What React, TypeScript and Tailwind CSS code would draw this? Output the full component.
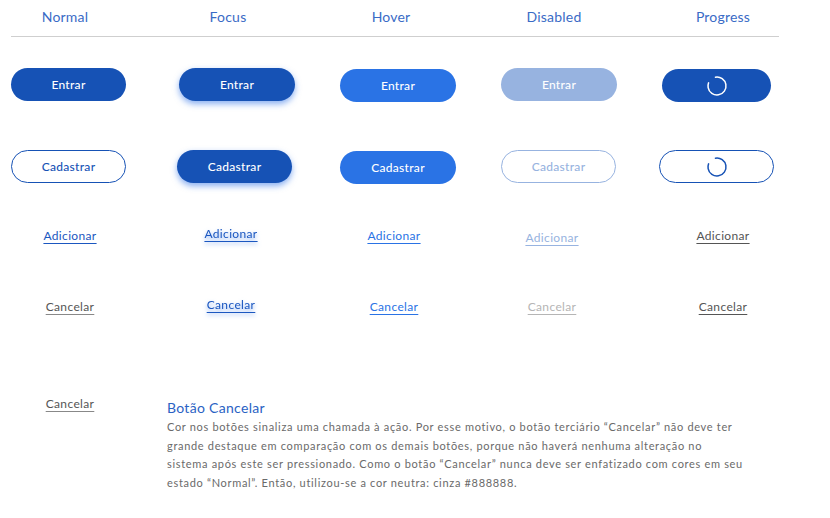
import React from "react";

const font = { fontFamily: "Lato, 'Open Sans', sans-serif" };

function Spinner({ color }: { color: string }) {
  const r = 9;
  const c = 2 * Math.PI * r;
  return (
    <svg width="22" height="22" viewBox="0 0 22 22" className="block">
      <circle
        cx="11"
        cy="11"
        r={r}
        fill="none"
        stroke={color}
        strokeWidth="1.5"
        strokeDasharray={`${c * 0.83} ${c}`}
        transform="rotate(-100 11 11)"
        strokeLinecap="round"
      />
    </svg>
  );
}

export default function App() {
  return (
    <div className="w-[830px] h-[518px] bg-white relative overflow-hidden" style={font}>
      {/* Header */}
      <div className="flex pt-[8px] text-[14px] leading-[18px] text-[#3a6bc6] tracking-[0.2px]">
        <div className="w-[130px] text-center">Normal</div>
        <div className="w-[196px] text-center">Focus</div>
        <div className="w-[130px] text-center">Hover</div>
        <div className="w-[196px] text-center">Disabled</div>
        <div className="w-[142px] text-center">Progress</div>
      </div>
      <div className="ml-[11px] mt-[10px] w-[768px] h-px bg-[#cfcfcf]" />

      {/* Entrar row */}
      <div className="flex items-start mt-[31px] h-[34px] text-[12px] font-medium tracking-[0.3px] text-white">
        <div className="ml-[11px] w-[115px] h-[33px] rounded-full bg-[#1652b5] flex items-center justify-center">Entrar</div>
        <div className="ml-[53px] w-[116px] h-[33px] rounded-full bg-[#1652b5] flex items-center justify-center shadow-[0_3px_6px_rgba(40,110,230,0.55)]">Entrar</div>
        <div className="ml-[45px] w-[116px] h-[33px] mt-[1px] rounded-full bg-[#2a73e5] flex items-center justify-center">Entrar</div>
        <div className="ml-[45px] w-[116px] h-[33px] rounded-full bg-[#97b3e0] flex items-center justify-center">Entrar</div>
        <div className="ml-[45px] w-[109px] h-[33px] mt-[1px] rounded-full bg-[#1652b5] flex items-center justify-center">
          <Spinner color="#ffffff" />
        </div>
      </div>

      {/* Cadastrar row */}
      <div className="flex items-start mt-[48px] h-[34px] text-[12px] font-medium tracking-[0.3px]">
        <div className="ml-[11px] w-[115px] h-[33px] rounded-full border border-[#1652b5] text-[#1652b5] flex items-center justify-center">Cadastrar</div>
        <div className="ml-[51px] w-[115px] h-[33px] rounded-full bg-[#1652b5] text-white flex items-center justify-center shadow-[0_3px_6px_rgba(40,110,230,0.55)]">Cadastrar</div>
        <div className="ml-[48px] w-[116px] h-[33px] mt-[1px] rounded-full bg-[#2a73e5] text-white flex items-center justify-center">Cadastrar</div>
        <div className="ml-[45px] w-[115px] h-[33px] rounded-full border border-[#97b3e0] text-[#97b3e0] flex items-center justify-center">Cadastrar</div>
        <div className="ml-[43px] w-[115px] h-[33px] rounded-full border-[1.5px] border-[#1652b5] flex items-center justify-center">
          <Spinner color="#1652b5" />
        </div>
      </div>

      {/* Adicionar row */}
      <div className="flex items-start mt-[44px] h-[20px] text-[12px] leading-[16px] tracking-[0.35px]">
        <div className="w-[140px] text-center"><span className="text-[#1b57c0] underline underline-offset-[3px] decoration-[#1b57c0]">Adicionar</span></div>
        <div className="w-[182px] text-center -mt-[2px]"><span className="text-[#1b57c0] underline underline-offset-[3px] drop-shadow-[0_2px_2px_rgba(40,110,230,0.6)]">Adicionar</span></div>
        <div className="w-[144px] text-center"><span className="text-[#2a73e5] underline underline-offset-[3px]">Adicionar</span></div>
        <div className="w-[172px] text-center mt-[2px]"><span className="text-[#97b3e0] underline underline-offset-[3px]">Adicionar</span></div>
        <div className="w-[170px] text-center"><span className="text-[#555555] underline underline-offset-[3px]">Adicionar</span></div>
      </div>

      {/* Cancelar row */}
      <div className="flex items-start mt-[51px] h-[20px] text-[12px] leading-[16px] tracking-[0.35px]">
        <div className="w-[140px] text-center"><span className="text-[#555555] underline underline-offset-[3px] decoration-[#888888]">Cancelar</span></div>
        <div className="w-[182px] text-center -mt-[2px]"><span className="text-[#1b57c0] underline underline-offset-[3px] drop-shadow-[0_2px_2px_rgba(40,110,230,0.6)]">Cancelar</span></div>
        <div className="w-[144px] text-center"><span className="text-[#2a73e5] underline underline-offset-[3px]">Cancelar</span></div>
        <div className="w-[172px] text-center"><span className="text-[#b5b5b5] underline underline-offset-[3px]">Cancelar</span></div>
        <div className="w-[170px] text-center"><span className="text-[#555555] underline underline-offset-[3px]">Cancelar</span></div>
      </div>

      {/* Bottom section */}
      <div className="flex items-start mt-[77px]">
        <div className="w-[140px] text-center text-[12px] leading-[16px] tracking-[0.35px]">
          <span className="text-[#555555] underline underline-offset-[3px] decoration-[#888888]">Cancelar</span>
        </div>
        <div className="ml-[27px] mt-[2px] w-[640px]">
          <div className="text-[14px] leading-[20px] tracking-[0.3px] text-[#2a62c4]">Botão Cancelar</div>
          <p className="text-[11px] leading-[18.7px] tracking-[0.68px] text-[#6a6a6a] whitespace-nowrap">
            Cor nos botões sinaliza uma chamada à ação. Por esse motivo, o botão terciário “Cancelar” não deve ter
            <br />
            grande destaque em comparação com os demais botões, porque não haverá nenhuma alteração no
            <br />
            sistema após este ser pressionado. Como o botão “Cancelar” nunca deve ser enfatizado com cores em seu
            <br />
            estado “Normal”. Então, utilizou-se a cor neutra: cinza #888888.
          </p>
        </div>
      </div>
    </div>
  );
}
